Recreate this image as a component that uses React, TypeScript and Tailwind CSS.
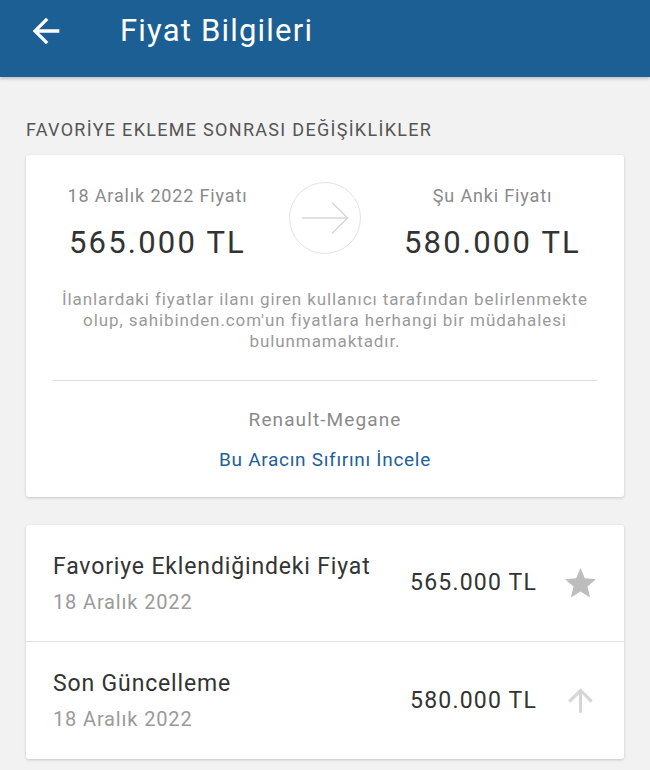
const StarIcon = () => (
    <svg viewBox="0 0 24 24" className="w-[37px] h-[37px]" fill="#bdbdbd">
        <path d="M12 17.27L18.18 21l-1.64-7.03L22 9.24l-7.19-.61L12 2 9.19 8.63 2 9.24l5.46 4.73L5.82 21z" />
    </svg>
);

const UpIcon = () => (
    <svg viewBox="0 0 24 24" className="w-[37px] h-[37px]" fill="#d6d6d6">
        <path d="M4 12l1.41 1.41L11 7.83V20h2V7.83l5.58 5.59L20 12l-8-8-8 8z" />
    </svg>
);

const App = () => {
    return (
        <div className="min-h-[770px] bg-[#f2f2f2]" style={{ fontFamily: "Roboto, 'Noto Sans', sans-serif" }}>
            {/* Top bar */}
            <div className="h-[77px] bg-[#1c5f94] shadow-[0_2px_3px_rgba(0,0,0,0.2)]">
                <div className="h-[62px] flex items-center pl-[26px]">
                    <svg viewBox="0 0 24 24" className="w-[40px] h-[40px]" fill="white">
                        <path d="M20 11H7.83l5.59-5.59L12 4l-8 8 8 8 1.41-1.41L7.83 13H20v-2z" />
                    </svg>
                    <h1 className="ml-[54px] text-white text-[31px] leading-[36px] tracking-[1.2px]">Fiyat Bilgileri</h1>
                </div>
            </div>

            <div className="px-[26px]">
                <div className="pt-[43px] pb-[15px] text-[18px] leading-[20px] text-[#555] tracking-[1.3px]">
                    FAVORİYE EKLEME SONRASI DEĞİŞİKLİKLER
                </div>

                {/* Summary card */}
                <div className="bg-white rounded-[3px] shadow-[0_1px_3px_rgba(0,0,0,0.18)]">
                    <div className="flex items-start pt-[27px]">
                        <div className="flex-1 flex flex-col items-center pt-[3px]">
                            <div className="text-[18px] leading-[22px] text-[#8a8a8a] tracking-[0.85px]">18 Aralık 2022 Fiyatı</div>
                            <div className="text-[31px] leading-[38px] text-[#333] mt-[17px] tracking-[2.2px]">565.000 TL</div>
                        </div>
                        <div className="w-[72px] h-[72px] rounded-full border-[1.5px] border-[#e3e3e3] flex items-center justify-center">
                            <svg viewBox="0 0 48 34" className="w-[48px] h-[34px]" fill="none" stroke="#d9d9d9" strokeWidth={1.6}>
                                <path d="M1 17H46.5M31 1.5L46.5 17L31 32.5" />
                            </svg>
                        </div>
                        <div className="flex-1 flex flex-col items-center pt-[3px]">
                            <div className="text-[18px] leading-[22px] text-[#8a8a8a] tracking-[0.85px]">Şu Anki Fiyatı</div>
                            <div className="text-[31px] leading-[38px] text-[#333] mt-[17px] tracking-[2.2px]">580.000 TL</div>
                        </div>
                    </div>
                    <p className="mt-[27px] px-[20px] text-center text-[17px] leading-[21px] text-[#9a9a9a] tracking-[0.9px]">
                        İlanlardaki fiyatlar ilanı giren kullanıcı tarafından belirlenmekte
                        <br />
                        olup, sahibinden.com'un fiyatlara herhangi bir müdahalesi
                        <br />
                        bulunmamaktadır.
                    </p>
                    <div className="mx-[27px] mt-[28px] border-t border-[#dcdcdc]" />
                    <div className="text-center pt-[27px] pb-[25px]">
                        <div className="text-[19px] leading-[24px] text-[#8a8a8a] tracking-[1.1px]">Renault-Megane</div>
                        <div className="mt-[16px] text-[19px] leading-[24px] text-[#1e5f99] tracking-[0.7px]">Bu Aracın Sıfırını İncele</div>
                    </div>
                </div>

                {/* Price history */}
                <div className="mt-[28px] bg-white rounded-[3px] shadow-[0_1px_3px_rgba(0,0,0,0.18)]">
                    <div className="h-[117px] flex items-center pl-[27px] pr-[25px] border-b border-[#e0e0e0]">
                        <div className="flex-1">
                            <div className="text-[23px] leading-[28px] text-[#333] tracking-[0.85px]">Favoriye Eklendiğindeki Fiyat</div>
                            <div className="mt-[9px] text-[20px] leading-[24px] text-[#9a9a9a] tracking-[0.85px]">18 Aralık 2022</div>
                        </div>
                        <div className="text-[23px] leading-[28px] text-[#333] mr-[25px] tracking-[1.2px]">565.000 TL</div>
                        <StarIcon />
                    </div>
                    <div className="h-[117px] flex items-center pl-[27px] pr-[25px]">
                        <div className="flex-1">
                            <div className="text-[23px] leading-[28px] text-[#333] tracking-[0.85px]">Son Güncelleme</div>
                            <div className="mt-[9px] text-[20px] leading-[24px] text-[#9a9a9a] tracking-[0.85px]">18 Aralık 2022</div>
                        </div>
                        <div className="text-[23px] leading-[28px] text-[#333] mr-[25px] tracking-[1.2px]">580.000 TL</div>
                        <UpIcon />
                    </div>
                </div>
            </div>
        </div>
    );
};

export default App;
